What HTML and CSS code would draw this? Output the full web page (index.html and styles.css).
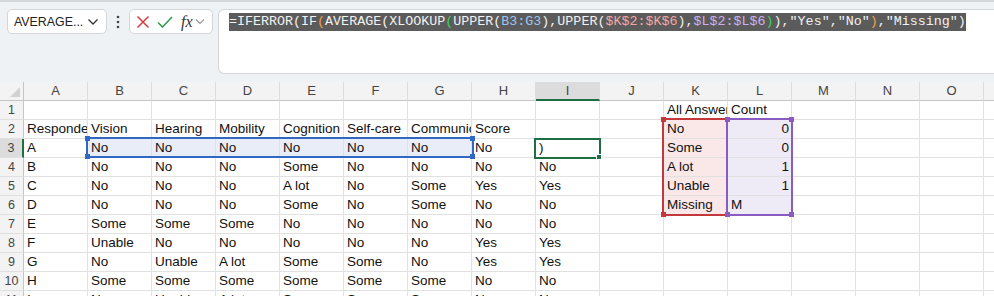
FILE: index.html
```html
<!DOCTYPE html>
<html lang="en">

<head>
          <meta charset="UTF-8">
          <title>Book1 - Excel</title>
          <link rel="stylesheet" href="styles.css">
</head>

<body>
          <div class="toolbar">
                    <div class="namebox">
                              <span>AVERAGE...</span>
                              <svg class="chev" width="12" height="8" viewBox="0 0 12 8"><path d="M1.5 1.5 L6 6 L10.5 1.5" fill="none" stroke="#333" stroke-width="1.3"/></svg>
                    </div>
                    <div class="dots">
                              <svg width="4" height="14" viewBox="0 0 4 14"><circle cx="2" cy="2" r="1.3" fill="#444"/><circle cx="2" cy="7" r="1.3" fill="#444"/><circle cx="2" cy="12" r="1.3" fill="#444"/></svg>
                    </div>
                    <div class="fxbox">
                              <svg class="cancel" width="14" height="14" viewBox="0 0 14 14"><path d="M1.5 1.5 L12.5 12.5 M12.5 1.5 L1.5 12.5" stroke="#d63b3b" stroke-width="1.5" fill="none"/></svg>
                              <svg class="enter" width="16" height="12" viewBox="0 0 16 12"><path d="M1 6.5 L5.5 11 L15 1" stroke="#2e9a4a" stroke-width="1.5" fill="none"/></svg>
                              <span class="fx">fx</span>
                              <svg class="chev2" width="10" height="7" viewBox="0 0 10 7"><path d="M1 1.5 L5 5.5 L9 1.5" fill="none" stroke="#9a9a9a" stroke-width="1.2"/></svg>
                    </div>
                    <div class="formula"><span class="hl">=IFERROR(IF<b class="p-or">(</b>AVERAGE(XLOOKUP<b class="p-gr">(</b>UPPER(<b class="r-bl">B3:G3</b>),UPPER(<b class="r-rd">$K$2:$K$6</b>),<b class="r-pu">$L$2:$L$6</b><b class="p-gr">)</b>),"Yes","No"<b class="p-or">)</b>,"Missing")</span></div>
          </div>

          <div class="sheet">
                    <div class="corner"><svg width="10" height="10" viewBox="0 0 10 10"><path d="M10 0 L10 10 L0 10 Z" fill="#d2d2d2"/></svg></div>
                    <div class="ch">A</div><div class="ch">B</div><div class="ch">C</div><div class="ch">D</div><div class="ch">E</div><div class="ch">F</div><div class="ch">G</div><div class="ch">H</div><div class="ch on">I</div><div class="ch">J</div><div class="ch">K</div><div class="ch">L</div><div class="ch">M</div><div class="ch">N</div><div class="ch">O</div><div class="ch">P</div>

                    <div class="rh">1</div>
                    <div class="c"></div><div class="c"></div><div class="c"></div><div class="c"></div><div class="c"></div><div class="c"></div><div class="c"></div><div class="c"></div><div class="c"></div><div class="c"></div><div class="c">All Answers</div><div class="c">Count</div><div class="c"></div><div class="c"></div><div class="c"></div><div class="c"></div>

                    <div class="rh">2</div>
                    <div class="c">Respondent</div><div class="c">Vision</div><div class="c">Hearing</div><div class="c">Mobility</div><div class="c">Cognition</div><div class="c">Self-care</div><div class="c">Communication</div><div class="c">Score</div><div class="c"></div><div class="c"></div><div class="c pk">No</div><div class="c lv n">0</div><div class="c"></div><div class="c"></div><div class="c"></div><div class="c"></div>

                    <div class="rh on">3</div>
                    <div class="c">A</div><div class="c bl">No</div><div class="c bl">No</div><div class="c bl">No</div><div class="c bl">No</div><div class="c bl">No</div><div class="c bl">No</div><div class="c">No</div><div class="c">)</div><div class="c"></div><div class="c pk">Some</div><div class="c lv n">0</div><div class="c"></div><div class="c"></div><div class="c"></div><div class="c"></div>

                    <div class="rh">4</div>
                    <div class="c">B</div><div class="c">No</div><div class="c">No</div><div class="c">No</div><div class="c">Some</div><div class="c">No</div><div class="c">No</div><div class="c">No</div><div class="c">No</div><div class="c"></div><div class="c pk">A lot</div><div class="c lv n">1</div><div class="c"></div><div class="c"></div><div class="c"></div><div class="c"></div>

                    <div class="rh">5</div>
                    <div class="c">C</div><div class="c">No</div><div class="c">No</div><div class="c">No</div><div class="c">A lot</div><div class="c">No</div><div class="c">Some</div><div class="c">Yes</div><div class="c">Yes</div><div class="c"></div><div class="c pk">Unable</div><div class="c lv n">1</div><div class="c"></div><div class="c"></div><div class="c"></div><div class="c"></div>

                    <div class="rh">6</div>
                    <div class="c">D</div><div class="c">No</div><div class="c">No</div><div class="c">No</div><div class="c">Some</div><div class="c">No</div><div class="c">Some</div><div class="c">No</div><div class="c">No</div><div class="c"></div><div class="c pk">Missing</div><div class="c lv">M</div><div class="c"></div><div class="c"></div><div class="c"></div><div class="c"></div>

                    <div class="rh">7</div>
                    <div class="c">E</div><div class="c">Some</div><div class="c">Some</div><div class="c">Some</div><div class="c">No</div><div class="c">No</div><div class="c">No</div><div class="c">No</div><div class="c">No</div><div class="c"></div><div class="c"></div><div class="c"></div><div class="c"></div><div class="c"></div><div class="c"></div><div class="c"></div>

                    <div class="rh">8</div>
                    <div class="c">F</div><div class="c">Unable</div><div class="c">No</div><div class="c">No</div><div class="c">No</div><div class="c">No</div><div class="c">No</div><div class="c">Yes</div><div class="c">Yes</div><div class="c"></div><div class="c"></div><div class="c"></div><div class="c"></div><div class="c"></div><div class="c"></div><div class="c"></div>

                    <div class="rh">9</div>
                    <div class="c">G</div><div class="c">No</div><div class="c">Unable</div><div class="c">A lot</div><div class="c">Some</div><div class="c">Some</div><div class="c">No</div><div class="c">Yes</div><div class="c">Yes</div><div class="c"></div><div class="c"></div><div class="c"></div><div class="c"></div><div class="c"></div><div class="c"></div><div class="c"></div>

                    <div class="rh">10</div>
                    <div class="c">H</div><div class="c">Some</div><div class="c">Some</div><div class="c">Some</div><div class="c">Some</div><div class="c">Some</div><div class="c">Some</div><div class="c">No</div><div class="c">No</div><div class="c"></div><div class="c"></div><div class="c"></div><div class="c"></div><div class="c"></div><div class="c"></div><div class="c"></div>

                    <div class="rh">11</div>
                    <div class="c">I</div><div class="c">No</div><div class="c">Unable</div><div class="c">A lot</div><div class="c">Some</div><div class="c">Some</div><div class="c">Some</div><div class="c">No</div><div class="c">No</div><div class="c"></div><div class="c"></div><div class="c"></div><div class="c"></div><div class="c"></div><div class="c"></div><div class="c"></div>

                    <!-- range outlines drawn over the grid -->
                    <div class="range sel"><i class="h tl"></i><i class="h tr"></i><i class="h bl"></i><i class="h br"></i></div>
                    <div class="range red"><i class="h tl"></i><i class="h bl"></i></div>
                    <div class="range pur"><i class="h tl"></i><i class="h tr"></i><i class="h bl"></i><i class="h br"></i></div>
                    <div class="range active"><i class="h br"></i></div>
          </div>
</body>

</html>
```

FILE: styles.css
```css
* {
          padding: 0;
          margin: 0;
          box-sizing: border-box;
}

body {
          width: 994px;
          height: 296px;
          overflow: hidden;
          background: #ffffff;
          font-family: 'Liberation Sans', Arial, sans-serif;
          color: #111;
}

/* formula bar */
.toolbar {
          height: 82px;
          background: #eff2f5;
          border-top: 2px solid #d4d6d9;
          padding: 7px 0 0 7px;
          display: flex;
          align-items: flex-start;
}

.namebox {
          width: 100px;
          height: 25px;
          background: #fff;
          border: 1px solid #d3d5d8;
          border-radius: 5px;
          display: flex;
          align-items: center;
          justify-content: space-between;
          padding: 0 7px 0 6px;
          font-size: 12.4px;
          color: #222;
}

.dots {
          width: 22px;
          height: 25px;
          display: flex;
          align-items: center;
          justify-content: center;
}

.fxbox {
          width: 84px;
          height: 25px;
          background: #fff;
          border: 1px solid #d3d5d8;
          border-radius: 5px;
          display: flex;
          align-items: center;
          padding-left: 6px;
}

.cancel {
          margin-right: 7px;
}

.enter {
          margin-right: 8px;
}

.fx {
          font-family: 'Liberation Serif', 'Times New Roman', serif;
          font-style: italic;
          font-size: 16px;
          color: #333;
          margin-right: 2px;
}

.formula {
          flex: 1;
          height: 65px;
          margin-left: 5px;
          background: #fff;
          border: 1px solid #d3d5d8;
          border-right: 0;
          border-radius: 6px 0 0 6px;
          padding: 3px 0 0 10px;
          font-family: 'Liberation Mono', 'Courier New', monospace;
          font-size: 13.35px;
          line-height: 18px;
          white-space: nowrap;
          overflow: hidden;
}

.formula .hl {
          background: #5b5b5b;
          color: #f2f2f2;
          display: inline-block;
}

.formula b {
          font-weight: normal;
}

.p-or { color: #f0a040; }
.p-gr { color: #3fd060; }
.r-bl { color: #9cc4f2; }
.r-rd { color: #f2a7a7; }
.r-pu { color: #c9b2f2; }

/* grid */
.sheet {
          position: relative;
          display: grid;
          grid-template-columns: 24px repeat(16, 64px);
          grid-auto-rows: 19px;
          width: 1048px;
}

.corner,
.ch,
.rh {
          background: #f3f3f3;
          color: #444;
          font-size: 13px;
          line-height: 18px;
          text-align: center;
}

.corner {
          border-right: 1px solid #c6c6c6;
          border-bottom: 1px solid #c6c6c6;
          display: flex;
          align-items: flex-end;
          justify-content: flex-end;
          padding: 0 3px 3px 0;
}

.ch {
          border-right: 1px solid #dcdcdc;
          border-bottom: 1px solid #c6c6c6;
}

.ch.on {
          background: #dcdcdc;
          border-bottom: 2px solid #1f6e43;
}

.rh {
          border-right: 1px solid #c6c6c6;
          border-bottom: 1px solid #e0e0e0;
          font-size: 12.5px;
}

.rh.on {
          background: #dcdcdc;
          border-right: 2px solid #1f6e43;
}

.c {
          border-right: 1px solid #e1e1e1;
          border-bottom: 1px solid #e1e1e1;
          padding: 0 2px 0 3px;
          font-size: 13.5px;
          line-height: 18px;
          white-space: nowrap;
          overflow: hidden;
}

.c.n {
          text-align: right;
}

.c.bl { background: #e8edf7; }
.c.pk { background: #fae8e8; }
.c.lv { background: #eeebf7; }

/* range outlines */
.range {
          position: absolute;
          border: 2px solid;
}

.range .h {
          position: absolute;
          width: 5px;
          height: 5px;
}

.h.tl { left: -3px; top: -3px; }
.h.tr { right: -3px; top: -3px; }
.h.bl { left: -3px; bottom: -3px; }
.h.br { right: -3px; bottom: -3px; }

.sel {
          left: 86px;
          top: 55px;
          width: 388px;
          height: 21px;
          border-color: #3167c5;
}

.sel .h { background: #3167c5; }

.red {
          left: 662px;
          top: 36px;
          width: 66px;
          height: 98px;
          border-color: #c3383c;
}

.red .h { background: #c3383c; }

.pur {
          left: 726px;
          top: 36px;
          width: 67px;
          height: 98px;
          border-color: #8a5cc2;
}

.pur .h { background: #8a5cc2; }

.active {
          left: 534px;
          top: 56px;
          width: 67px;
          height: 21px;
          border-color: #1f6e43;
}

.active .h {
          background: #1f6e43;
          border: 1px solid #fff;
          width: 6px;
          height: 6px;
}
```
